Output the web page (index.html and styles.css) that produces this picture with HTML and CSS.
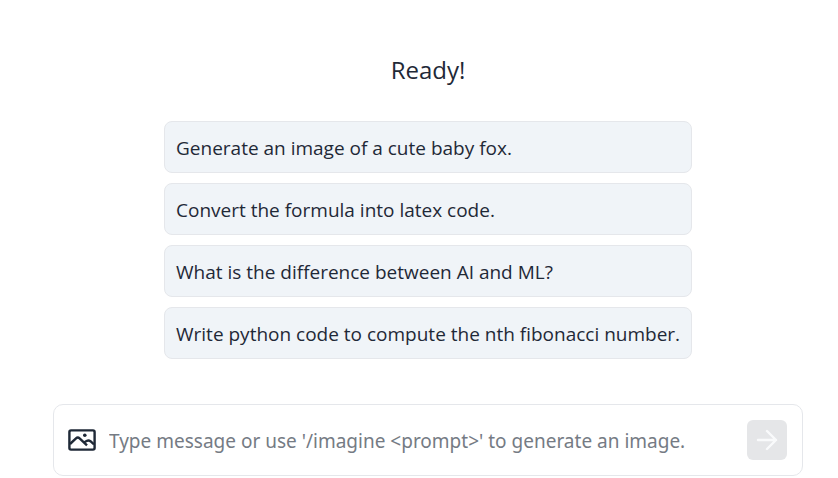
FILE: index.html
```html
<!DOCTYPE html>
<html lang="en">
<head>
    <meta charset="UTF-8">
    <meta name="viewport" content="width=device-width, initial-scale=1.0">
    <title>Chat</title>
    <link rel="stylesheet" href="styles.css">
</head>
<body>
    <main class="chat">
        <h1>Ready!</h1>

        <div class="suggestions">
            <button type="button" class="suggestion">Generate an image of a cute baby fox.</button>
            <button type="button" class="suggestion">Convert the formula into latex code.</button>
            <button type="button" class="suggestion">What is the difference between AI and ML?</button>
            <button type="button" class="suggestion">Write python code to compute the nth fibonacci number.</button>
        </div>

        <form class="prompt">
            <button type="button" class="image-button" aria-label="Add image">
                <svg width="28" height="22" viewBox="0 0 28 22" fill="none" stroke="currentColor" stroke-width="2.4" stroke-linejoin="round">
                    <rect x="1.4" y="1.4" width="25.2" height="19.2" rx="1.6"/>
                    <path d="M2 15L8 9.4Q9.8 7.8 11.6 9.4L19 16.4M16 13.6L18.6 12Q20.6 10.8 22.4 12.2L26 15.4"/>
                    <circle cx="16.8" cy="6.2" r="1.8" fill="currentColor" stroke="none"/>
                </svg>
            </button>
            <input type="text" class="message" aria-label="Message" placeholder="Type message or use '/imagine &lt;prompt&gt;' to generate an image.">
            <button type="submit" class="send-button" aria-label="Send" disabled>
                <svg width="22" height="22" viewBox="0 0 22 22" fill="none" stroke="currentColor" stroke-width="2.4" stroke-linecap="round" stroke-linejoin="round">
                    <path d="M2 11H20M11 2L20 11L11 20"/>
                </svg>
            </button>
        </form>
    </main>
</body>
</html>
```
FILE: styles.css
```css
* {
    box-sizing: border-box;
}

body {
    margin: 0;
    background-color: #fff;
    color: #1f2937;
    font-family: "Open Sans", "Noto Sans", sans-serif;
}

button, input {
    font-family: inherit;
    color: inherit;
}

.chat {
    display: flex;
    flex-direction: column;
    align-items: center;
    padding: 52px 35px 0 53px;
}

h1 {
    margin: 0 0 33px;
    font-size: 24px;
    font-weight: 400;
    line-height: 36px;
}

.suggestions {
    display: flex;
    flex-direction: column;
    gap: 10px;
    width: 100%;
    max-width: 528px;
    margin-bottom: 45px;
}

.suggestion {
    padding: 12px 10px 10px 11px;
    border: 1px solid #e5e7eb;
    border-radius: 8px;
    background-color: #f0f4f8;
    font-size: 19px;
    line-height: 28px;
    text-align: left;
    cursor: pointer;
}

.prompt {
    display: flex;
    align-items: center;
    width: 100%;
    padding: 15px 15px 15px 14px;
    border: 1px solid #e5e7eb;
    border-radius: 10px;
}

.image-button {
    display: flex;
    padding: 0;
    border: none;
    background: none;
    cursor: pointer;
}

.message {
    flex: 1;
    min-width: 0;
    height: 40px;
    margin: 0 12px 0 13px;
    padding: 2px 0 0;
    border: none;
    outline: none;
    background: none;
    font-family: "Noto Sans", "Open Sans", sans-serif;
    font-size: 19px;
}

.message::placeholder {
    color: #757b84;
    opacity: 1;
}

.send-button {
    display: flex;
    align-items: center;
    justify-content: center;
    width: 40px;
    height: 40px;
    padding: 0;
    border: none;
    border-radius: 6px;
    background-color: #e5e6e8;
    color: #f9fafb;
}
```
